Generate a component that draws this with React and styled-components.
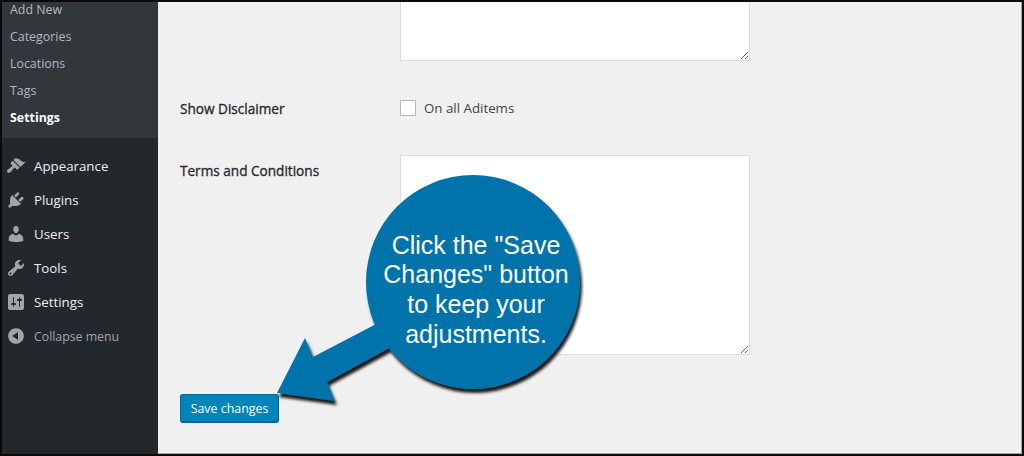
import React from "react";
import styled, { createGlobalStyle } from "styled-components";

const Global = createGlobalStyle`
  html, body { margin: 0; padding: 0; width: 1024px; height: 456px; overflow: hidden; background: #000; }
  * { box-sizing: border-box; }
`;

const Frame = styled.div`
  position: relative;
  width: 1024px;
  height: 456px;
  border: 2px solid #0a0a0a;
  display: flex;
  overflow: hidden;
  font-family: "Open Sans", "Noto Sans", sans-serif;
`;

const Sidebar = styled.nav`
  width: 156px;
  flex: none;
  background: #23282d;
  display: flex;
  flex-direction: column;
`;

const SubMenu = styled.ul`
  list-style: none;
  margin: 0;
  padding: 7px 0 7px;
  height: 136px;
  background: #32373c;
  display: flex;
  flex-direction: column;
  justify-content: flex-end;
`;

const SubItem = styled.li`
  height: 27px;
  flex: none;
  line-height: 27px;
  padding-left: 8px;
  font-size: 12.4px;
  color: ${(p) => (p.$active ? "#fff" : "#b4b9be")};
  font-weight: ${(p) => (p.$active ? 700 : 400)};
`;

const MainMenu = styled.ul`
  list-style: none;
  margin: 0;
  padding: 11px 0 0;
`;

const MenuItem = styled.li`
  height: 34px;
  display: flex;
  align-items: center;
  gap: 8px;
  padding-left: 4px;
  font-size: ${(p) => (p.$muted ? "12.3px" : "13.3px")};
  color: ${(p) => (p.$muted ? "#a0a5aa" : "#eee")};
  svg { width: 20px; height: 20px; fill: #a0a5aa; flex: none; }
`;

const Main = styled.main`
  flex: 1;
  background: #f0f0f0;
  padding-left: 22px;
  box-shadow: inset -1px -1px 0 #a8a8a8;
  display: flex;
  flex-direction: column;
  align-items: flex-start;
  gap: 39px;
`;

const Row = styled.div`
  display: grid;
  grid-template-columns: 220px 350px;
  grid-template-rows: ${(p) => (p.$center ? "16px" : "auto")};
  align-items: ${(p) => (p.$center ? "center" : "start")};
`;

const Label = styled.label`
  font-size: 13.6px;
  font-weight: 400;
  -webkit-text-stroke: 0.3px #23282d;
  color: #23282d;
  padding-top: ${(p) => (p.$center ? "2px" : "7px")};
  line-height: ${(p) => (p.$center ? "16px" : "18px")};
`;

const Area = styled.textarea`
  display: block;
  margin: 0;
  width: 350px;
  height: ${(p) => p.$h}px;
  background: #fff;
  border: 1px solid #ddd;
  border-top-width: ${(p) => (p.$cut ? 0 : 1)}px;
  border-radius: 0;
  outline: none;
  resize: vertical;
`;

const CheckLine = styled.div`
  display: flex;
  align-items: center;
  gap: 8px;
  font-size: 13.3px;
  line-height: 16px;
  color: #444;
`;

const Box = styled.span`
  width: 16px;
  height: 16px;
  background: #fff;
  border: 1px solid #b4b9be;
`;

const SaveButton = styled.button`
  width: 99px;
  height: 29px;
  padding: 0;
  background: #0085ba;
  border: 1px solid #006799;
  border-bottom-width: 2px;
  border-radius: 3px;
  color: #fff;
  font-family: inherit;
  font-size: 12.4px;
`;

const Callout = styled.div`
  position: absolute;
  left: 0;
  top: 0;
  width: 1020px;
  height: 452px;
  pointer-events: none;
`;

const CalloutArt = styled.svg`
  position: absolute;
  left: -2px;
  top: -2px;
  width: 1024px;
  height: 456px;
`;

const CalloutText = styled.div`
  position: absolute;
  left: 367px;
  top: 181px;
  width: 214px;
  height: 214px;
  display: flex;
  align-items: center;
  justify-content: center;
  text-align: center;
  font-family: "Liberation Sans", Arial, sans-serif;
  font-size: 25px;
  line-height: 29.7px;
  color: #fff;
`;

const icons = {
  appearance: "M14.48 11.06L7.41 3.99l1.5-1.5c.5-.56 2.3-.47 3.51.32 1.21.8 1.43 1.28 2.91 2.1 1.18.64 2.45 1.26 4.45.85zm-.71.71L6.7 4.7 4.93 6.47c-.39.39-.39 1.02 0 1.41l1.06 1.06c.39.39.39 1.03 0 1.42-.6.6-1.43 1.11-2.21 1.69-.35.26-.7.53-1.01.84C1.43 13.23.4 14.91 1.4 16.3s2.69.37 4.04-.98c.31-.31.58-.66.84-1.01.58-.78 1.09-1.61 1.69-2.21.39-.39 1.03-.39 1.42 0l1.06 1.06c.39.39 1.02.39 1.41 0z",
  plugins: "M13.11 4.36L9.87 7.6 8 5.73l3.24-3.24c.35-.34 1.05-.2 1.56.32.52.51.66 1.21.31 1.55zm-8 1.77l.91-1.12 9.01 9.01-1.19.84c-.71.71-2.63 1.16-3.82 1.16H6.14L4.9 17.26c-.59.59-1.54.59-2.12 0-.59-.58-.59-1.53 0-2.12l1.24-1.24v-3.88c0-1.13.4-3.19 1.09-3.89zm7.26 3.97l3.24-3.24c.34-.35 1.04-.21 1.55.31.52.51.66 1.21.31 1.55l-3.24 3.25z",
  users: "M10 9.25c-2.27 0-2.73-3.44-2.73-3.44C7 4.02 7.82 2 9.97 2c2.16 0 2.98 2.02 2.71 3.81 0 0-.41 3.44-2.68 3.44zm0 2.57L12.72 10c2.39 0 4.52 2.33 4.52 4.53v2.49s-3.65 1.13-7.24 1.13c-3.65 0-7.24-1.13-7.24-1.13v-2.49c0-2.25 1.94-4.48 4.47-4.48z",
  tools: "M16.68 9.77c-1.34 1.34-3.3 1.67-4.95.99l-5.41 6.52c-.99.99-2.59.99-3.58 0s-.99-2.59 0-3.57l6.52-5.42c-.68-1.65-.35-3.61.99-4.95 1.28-1.28 3.12-1.62 4.72-1.06l-2.89 2.89 2.82 2.82 2.86-2.87c.53 1.58.18 3.39-1.08 4.65zM3.81 16.21c.4.39 1.04.39 1.43 0 .4-.4.4-1.04 0-1.43-.39-.4-1.03-.4-1.43 0-.39.39-.39 1.03 0 1.43z",
  settings: "M18 16V4c0-1.1-.9-2-2-2H4c-1.1 0-2 .9-2 2v12c0 1.1.9 2 2 2h12c1.1 0 2-.9 2-2zM8 11h1c.55 0 1 .45 1 1s-.45 1-1 1H8v1.5c0 .28-.22.5-.5.5s-.5-.22-.5-.5V13H6c-.55 0-1-.45-1-1s.45-1 1-1h1V5.5c0-.28.22-.5.5-.5s.5.22.5.5V11zm5-2h-1c-.55 0-1-.45-1-1s.45-1 1-1h1V5.5c0-.28.22-.5.5-.5s.5.22.5.5V7h1c.55 0 1 .45 1 1s-.45 1-1 1h-1v5.5c0 .28-.22.5-.5.5s-.5-.22-.5-.5V9z",
  collapse: "M10 2.16c4.33 0 7.84 3.51 7.84 7.84s-3.51 7.84-7.84 7.84S2.16 14.33 2.16 10 5.71 2.16 10 2.16zm2 11.72V6.12L6.18 9.97z",
};

const Icon = ({ name }) => (
  <svg viewBox="0 0 20 20" aria-hidden="true"><path fillRule="evenodd" d={icons[name]} /></svg>
);

const sub = ["Categories", "Locations", "Tags"];
const menu = [
  ["appearance", "Appearance"],
  ["plugins", "Plugins"],
  ["users", "Users"],
  ["tools", "Tools"],
  ["settings", "Settings"],
];

export default function App() {
  return (
    <>
      <Global />
      <Frame>
        <Sidebar>
          <SubMenu>
            <SubItem>Add New</SubItem>
            {sub.map((s) => <SubItem key={s}>{s}</SubItem>)}
            <SubItem $active>Settings</SubItem>
          </SubMenu>
          <MainMenu>
            {menu.map(([i, t]) => (
              <MenuItem key={t}><Icon name={i} />{t}</MenuItem>
            ))}
            <MenuItem $muted><Icon name="collapse" />Collapse menu</MenuItem>
          </MainMenu>
        </Sidebar>
        <Main>
          <Row>
            <span />
            <Area $h={59} $cut />
          </Row>
          <Row $center>
            <Label $center>Show Disclaimer</Label>
            <CheckLine><Box />On all Aditems</CheckLine>
          </Row>
          <Row>
            <Label>Terms and Conditions</Label>
            <Area $h={200} />
          </Row>
          <SaveButton>Save changes</SaveButton>
        </Main>
        <Callout>
          <CalloutArt viewBox="0 0 1024 456">
            <defs>
              <filter id="sh" x="-20%" y="-20%" width="140%" height="140%">
                <feDropShadow dx="2" dy="4" stdDeviation="1.6" floodColor="#000" floodOpacity="0.9" />
              </filter>
            </defs>
            <g filter="url(#sh)" fill="#0073aa">
              <path d="M277 393 L305 338 L313 357 L380 322 L395 345 L327 382 L335 401 Z" />
              <circle cx="473" cy="282" r="107" />
            </g>
          </CalloutArt>
          <CalloutText>
            Click the "Save<br />Changes" button<br />to keep your<br />adjustments.
          </CalloutText>
        </Callout>
      </Frame>
    </>
  );
}
